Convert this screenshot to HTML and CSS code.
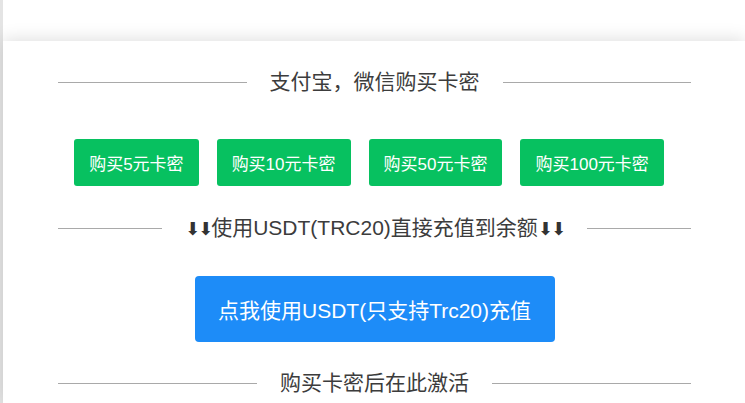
FILE: index.html
```html
<!DOCTYPE html>
<html lang="zh-CN">
<head>
<meta charset="utf-8">
<title>购买卡密</title>
<link rel="stylesheet" href="styles.css">
</head>
<body>
<div class="page">
  <header class="top"></header>
  <main class="card">
    <div class="content">
      <div class="divider"><span class="divider-text">支付宝，微信购买卡密</span></div>
      <div class="btn-row">
        <a class="btn-green">购买5元卡密</a>
        <a class="btn-green">购买10元卡密</a>
        <a class="btn-green">购买50元卡密</a>
        <a class="btn-green">购买100元卡密</a>
      </div>
      <div class="divider divider-usdt"><span class="divider-text"><span class="arrow">⬇︎⬇︎</span>使用USDT(TRC20)直接充值到余额<span class="arrow">⬇︎⬇︎</span></span></div>
      <div class="blue-row">
        <a class="btn-blue">点我使用USDT(只支持Trc20)充值</a>
      </div>
      <div class="divider divider-last"><span class="divider-text">购买卡密后在此激活</span></div>
    </div>
  </main>
</div>
</body>
</html>
```

FILE: styles.css
```css
html, body {
  margin: 0;
  padding: 0;
}
body {
  background: #e4e4e4;
  font-family: "Liberation Sans", "Noto Sans CJK SC", sans-serif;
  color: #3c3c3c;
  height: 403px;
  overflow: hidden;
}
.page {
  margin-left: 3px;
  background: #ffffff;
  height: 403px;
}
.top {
  height: 41px;
  background: #ffffff;
}
.card {
  position: relative;
  box-sizing: border-box;
  background: #ffffff;
  box-shadow: 0 -2px 16px rgba(0, 0, 0, 0.13);
  padding-top: 27px;
  height: 362px;
}
.content {
  margin-left: 55px;
  width: 633px;
}
.divider {
  display: flex;
  align-items: center;
  height: 28px;
  font-size: 21px;
  line-height: 28px;
}
.divider::before,
.divider::after {
  content: "";
  flex: 1;
  height: 1px;
  background: #a9a9a9;
}
.divider-text {
  padding: 0 23px;
  white-space: nowrap;
}
.arrow {
  font-family: "DejaVu Sans", sans-serif;
  font-size: 18px;
  letter-spacing: -2px;
  color: #333;
}
.btn-row {
  display: flex;
  justify-content: center;
  gap: 18px;
  margin-top: 43px;
  padding-right: 11px;
}
.btn-green {
  display: flex;
  align-items: center;
  height: 47px;
  padding: 0 15px;
  background: #07c160;
  color: #ffffff;
  font-size: 17px;
  border-radius: 3px;
  white-space: nowrap;
}
.divider-usdt {
  margin-top: 28px;
}
.blue-row {
  display: flex;
  justify-content: center;
  margin-top: 34px;
}
.btn-blue {
  display: flex;
  align-items: center;
  justify-content: center;
  width: 360px;
  height: 66px;
  background: #1d8cf8;
  color: #ffffff;
  font-size: 21px;
  border-radius: 4px;
  white-space: nowrap;
}
.divider-last {
  margin-top: 27px;
}
```
